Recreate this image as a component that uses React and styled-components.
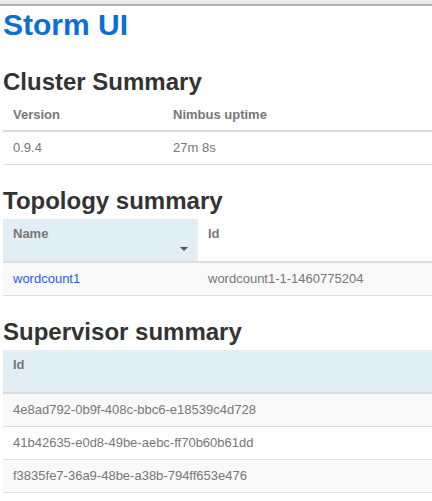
import React from "react";
import styled, { createGlobalStyle } from "styled-components";

const Global = createGlobalStyle`
  * { box-sizing: border-box; }
  html, body { margin: 0; padding: 0; background: #fff; overflow-x: hidden; }
  body { font-family: "Liberation Sans", Arial, sans-serif; color: #333; }
`;

const TopBar = styled.div`
  height: 6px;
  background: linear-gradient(#f2f2f2, #e4e4e4);
  border-bottom: 2px solid #b4b4b4;
`;

const Page = styled.div`
  padding: 0 0 0 3px;
`;

const Title = styled.h1`
  margin: 2px 0 28px;
  font-size: 30px;
  line-height: 33px;
  font-weight: bold;
  color: #0b6fd6;
`;

const Heading = styled.h2`
  margin: 23px 0 5px;
  font-size: 24px;
  line-height: 26px;
  font-weight: bold;
  color: #333;
`;

const Table = styled.table`
  width: 100%;
  border-collapse: collapse;
  border-spacing: 0;
  font-size: 13px;
  color: #777;
`;

const Th = styled.th`
  text-align: left;
  vertical-align: top;
  font-weight: bold;
  line-height: 16px;
  padding: 7px 10px ${(p) => (p.$tall ? (p.$sorted ? 10 : 19) : 7)}px;
  border-bottom: 2px solid #ddd;
  background: ${(p) => (p.$hl ? "#e1eef6" : "transparent")};
  width: ${(p) => p.$w || "auto"};
`;

const ThInner = styled.div`
  display: flex;
  flex-direction: column;
`;

const Caret = styled.span`
  align-self: flex-end;
  margin-top: 5px;
  width: 0;
  height: 0;
  border-left: 4px solid transparent;
  border-right: 4px solid transparent;
  border-top: 4px solid #555;
`;

const Tr = styled.tr`
  background: ${(p) => (p.$striped ? "#f9f9f9" : "#fff")};
`;

const Td = styled.td`
  padding: 8px 10px;
  line-height: 16px;
  border-bottom: 1px solid #ddd;
  vertical-align: top;
`;

const Link = styled.a`
  color: #2a5ed8;
  text-decoration: none;
`;

export default function App() {
  const supervisors = [
    "4e8ad792-0b9f-408c-bbc6-e18539c4d728",
    "41b42635-e0d8-49be-aebc-ff70b60b61dd",
    "f3835fe7-36a9-48be-a38b-794ff653e476",
  ];
  return (
    <>
      <Global />
      <TopBar />
      <Page>
        <Title>Storm UI</Title>
        <Heading>Cluster Summary</Heading>
        <Table>
          <thead>
            <tr>
              <Th $w="160px">Version</Th>
              <Th>Nimbus uptime</Th>
            </tr>
          </thead>
          <tbody>
            <Tr>
              <Td>0.9.4</Td>
              <Td>27m 8s</Td>
            </Tr>
          </tbody>
        </Table>
        <Heading>Topology summary</Heading>
        <Table>
          <thead>
            <tr>
              <Th $w="195px" $tall $sorted $hl>
                <ThInner>
                  Name
                  <Caret />
                </ThInner>
              </Th>
              <Th $tall>Id</Th>
            </tr>
          </thead>
          <tbody>
            <Tr $striped>
              <Td>
                <Link href="#">wordcount1</Link>
              </Td>
              <Td>wordcount1-1-1460775204</Td>
            </Tr>
          </tbody>
        </Table>
        <Heading>Supervisor summary</Heading>
        <Table>
          <thead>
            <tr>
              <Th $tall $hl>Id</Th>
            </tr>
          </thead>
          <tbody>
            {supervisors.map((s, i) => (
              <Tr key={s} $striped={i % 2 === 0}>
                <Td>{s}</Td>
              </Tr>
            ))}
          </tbody>
        </Table>
      </Page>
    </>
  );
}
